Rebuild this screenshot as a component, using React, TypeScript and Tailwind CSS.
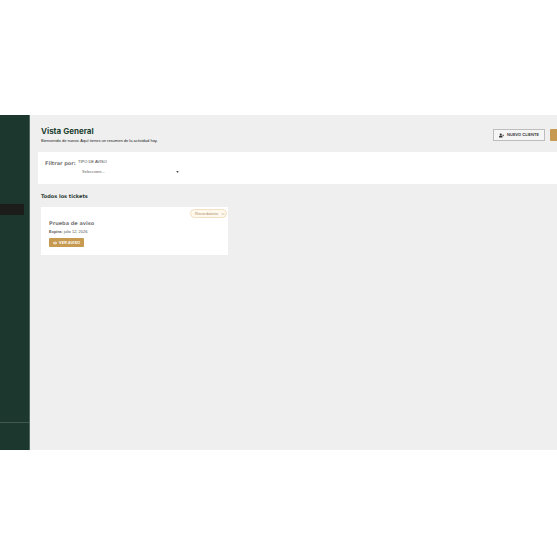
import React from "react";
import { Minus } from "lucide-react";
import { FaEye, FaUserPlus } from "react-icons/fa";

function Sidebar() {
  return (
    <aside className="flex w-[30px] shrink-0 flex-col border-r border-[#52695f] bg-[#1c372d]">
      <nav className="flex-1 pt-[89px] pr-[5px]">
        <a href="#general" aria-label="Vista General" className="block h-[11px] bg-[#1c1c1b]" />
      </nav>
      <div className="h-7 border-t border-[#42594f]" />
    </aside>
  );
}

function Header() {
  return (
    <header className="flex items-start justify-between pt-[11px] pl-[11px]">
      <div className="whitespace-nowrap">
        <h1 className="text-[8px] leading-[11px] font-bold text-[#1c4030]">Vista General</h1>
        <p className="font-['Liberation_Sans',sans-serif] text-[4px] leading-[8px] text-[#222222]">
          Bienvenido de nuevo. Aquí tienes un resumen de la actividad hoy.
        </p>
      </div>
      <div className="flex shrink-0 gap-[5px] pt-[3px]">
        <button
          type="button"
          className="flex h-3 w-[52px] items-center justify-center gap-[3px] border border-[#bdbdbd] bg-[#f5f5f5] text-[4px] leading-[6px] font-semibold whitespace-nowrap text-[#333333]"
        >
          <FaUserPlus size={5} />
          NUEVO CLIENTE
        </button>
        <button type="button" aria-label="Nuevo aviso" className="h-3 w-[7px] rounded-l-[1px] bg-[#c69a50]" />
      </div>
    </header>
  );
}

function Filters() {
  return (
    <section className="mt-[7px] ml-2 flex h-8 items-start bg-white pt-2 pl-[7px]">
      <h2 className="w-[33px] font-['DejaVu_Sans',sans-serif] text-[5px] leading-[6px] font-bold whitespace-nowrap text-[#777777]">
        Filtrar por:
      </h2>
      <div className="flex w-[103px] flex-col">
        <label
          htmlFor="tipo"
          className="font-['Liberation_Sans',sans-serif] text-[4px] leading-[4px] text-[#444444]"
        >
          TIPO DE AVISO
        </label>
        <div className="mt-[2px] flex h-3 items-center pr-[2px] pl-1">
          <select
            id="tipo"
            className="flex-1 appearance-none bg-transparent font-['Liberation_Sans',sans-serif] text-[4px] leading-[6px] text-[#666666]"
          >
            <option>Seleccione...</option>
          </select>
          <svg viewBox="0 0 4 3" className="h-[2px] w-[3px] fill-[#555555]" aria-hidden="true">
            <path d="M0 0h4L2 3z" />
          </svg>
        </div>
      </div>
    </section>
  );
}

function Ticket() {
  return (
    <article className="mt-[7px] flex h-12 w-[187px] justify-between bg-white pl-2">
      <div className="pt-3">
        <h3 className="font-['DejaVu_Sans',sans-serif] text-[5px] leading-[8px] font-bold text-[#777777]">
          Prueba de aviso
        </h3>
        <p className="mt-[2px] font-['Liberation_Sans',sans-serif] text-[4px] leading-[6px] text-[#555555]">
          <strong className="font-bold">Expira:</strong> julio 12, 2026
        </p>
        <button
          type="button"
          className="mt-[3px] flex h-[9px] w-[35px] items-center justify-center gap-[2px] rounded-[1px] bg-[#c69a50] text-[4px] leading-[6px] font-semibold text-white"
        >
          <FaEye size={4} />
          VER AVISO
        </button>
      </div>
      <span className="mt-[2px] mr-px flex h-[9px] w-[37px] items-center justify-between rounded-full border border-[#f2dfc4] bg-[#fff8ec] pr-px pl-1 font-['Liberation_Sans',sans-serif] text-[4px] leading-[6px] text-[#a8906c]">
        Recordatorio
        <Minus size={4} strokeWidth={3} />
      </span>
    </article>
  );
}

export default function App() {
  return (
    <div className="min-h-screen bg-white pt-[115px] font-['Inter',sans-serif]">
      <div className="flex min-h-[335px] overflow-hidden">
        <Sidebar />
        <main className="min-w-0 flex-1 bg-[#efefef]">
          <Header />
          <Filters />
          <section className="mt-2 pl-[11px]">
            <h2 className="font-['DejaVu_Sans',sans-serif] text-[5px] leading-[8px] font-bold text-[#2b3a33]">
              Todos los tickets
            </h2>
            <Ticket />
          </section>
        </main>
      </div>
    </div>
  );
}
